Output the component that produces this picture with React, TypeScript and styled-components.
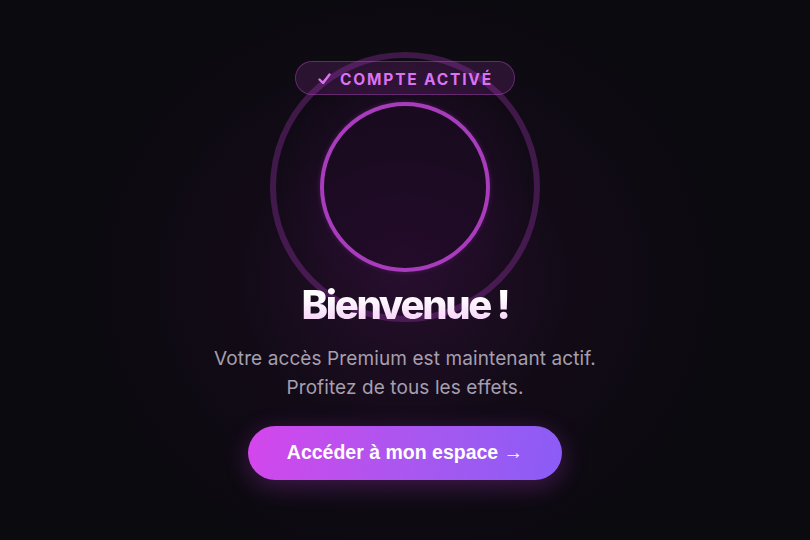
import React from "react";
import styled, { createGlobalStyle } from "styled-components";

const GlobalStyle = createGlobalStyle`
  html, body, #root {
    margin: 0;
    padding: 0;
    height: 100%;
  }
  body {
    background: #0b0a0f;
    font-family: Inter, "Noto Sans", sans-serif;
    -webkit-font-smoothing: antialiased;
  }
`;

const Page = styled.div`
  height: 100%;
  display: flex;
  align-items: center;
  justify-content: center;
  background: radial-gradient(
    ellipse 330px 300px at 50% 52%,
    rgba(100, 24, 110, 0.3) 0%,
    rgba(55, 16, 64, 0.16) 50%,
    rgba(11, 10, 15, 0) 100%
  );
  overflow: hidden;
`;

const Card = styled.div`
  display: flex;
  flex-direction: column;
  align-items: center;
  position: relative;
`;

const Badge = styled.div`
  position: relative;
  z-index: 2;
  display: flex;
  align-items: center;
  gap: 9px;
  height: 34px;
  padding: 3px 21px 0 22px;
  box-sizing: border-box;
  border-radius: 999px;
  border: 1px solid rgba(217, 90, 235, 0.32);
  background: rgba(190, 60, 210, 0.16);
  color: #dc72f2;
  font-size: 15.5px;
  font-weight: 700;
  letter-spacing: 1.8px;
`;

const CheckIcon = styled.svg`
  width: 13px;
  height: 12px;
  margin-top: -1px;
  flex: none;
`;

const Orb = styled.div`
  position: relative;
  width: 170px;
  height: 170px;
  margin-top: 7px;
  border-radius: 50%;
  border: 4px solid #c648dc;
  box-sizing: border-box;
  background: rgba(24, 10, 30, 0.35);
  box-shadow: 0 0 5px rgba(200, 70, 230, 0.3);

  &::before {
    content: "";
    position: absolute;
    inset: -54px;
    border-radius: 50%;
    border: 6px solid rgba(175, 58, 195, 0.3);
    background: radial-gradient(circle, rgba(50, 14, 60, 0.2) 50%, rgba(50, 14, 60, 0) 72%);
    pointer-events: none;
  }
`;

const Title = styled.h1`
  position: relative;
  z-index: 2;
  margin: 9px 0 0;
  font-size: 40px;
  line-height: 48px;
  font-weight: 800;
  letter-spacing: -2.3px;
  background: linear-gradient(180deg, #ffffff 30%, #f3c6f6 100%);
  -webkit-background-clip: text;
  background-clip: text;
  color: transparent;
`;

const Lead = styled.p`
  margin: 15px 0 0;
  text-align: center;
  font-size: 19px;
  line-height: 29px;
  letter-spacing: 0.1px;
  color: #a59fae;
`;

const CtaButton = styled.button`
  margin-top: 24px;
  width: 314px;
  height: 54px;
  padding: 0;
  border: none;
  border-radius: 27px;
  cursor: pointer;
  background: linear-gradient(100deg, #d446ec 0%, #a758f0 55%, #8b5cf6 100%);
  color: #ffffff;
  font-family: "Liberation Sans", Arial, sans-serif;
  font-size: 19.5px;
  font-weight: 700;
  box-shadow: 0 6px 24px rgba(200, 60, 230, 0.28);
`;

export default function App() {
  return (
    <>
      <GlobalStyle />
      <Page>
        <Card>
          <Badge>
            <CheckIcon viewBox="0 0 13 12" fill="none">
              <path
                d="M1.5 6.5 L5 10 L11.5 1.5"
                stroke="#dc72f2"
                strokeWidth="2.4"
                strokeLinecap="round"
                strokeLinejoin="round"
              />
            </CheckIcon>
            COMPTE ACTIVÉ
          </Badge>
          <Orb />
          <Title>Bienvenue !</Title>
          <Lead>
            Votre accès Premium est maintenant actif.
            <br />
            Profitez de tous les effets.
          </Lead>
          <CtaButton>Accéder à mon espace →</CtaButton>
        </Card>
      </Page>
    </>
  );
}
